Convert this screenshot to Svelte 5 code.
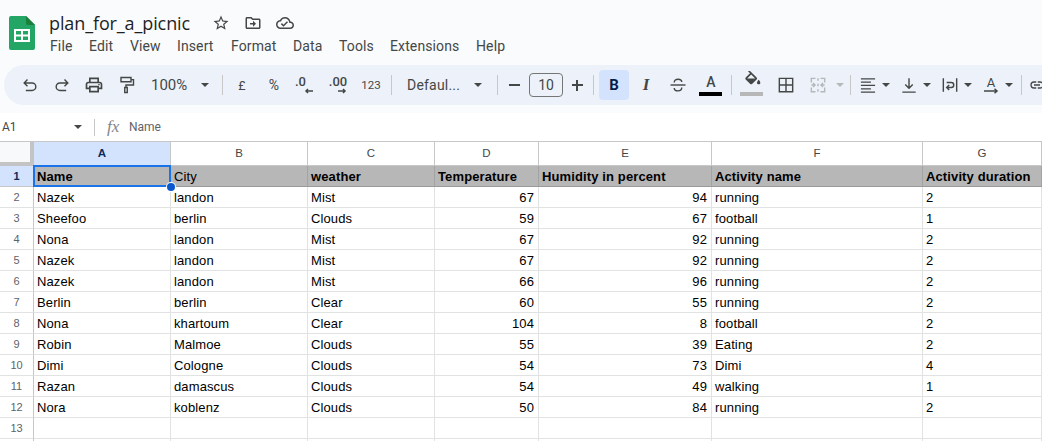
<script>
  const menu = [
    ['File', 39], ['Edit', 41], ['View', 47], ['Insert', 54], ['Format', 62],
    ['Data', 46], ['Tools', 51], ['Extensions', 86], ['Help', 40]
  ];

  const sw = 1.7;
  const icons = {
    undo: `<path d="M9 5.500 5 9.500l4 4M5 9.500h9.500a4.500 4.500 0 0 1 0 9H7" fill="none" stroke="currentColor" stroke-width="${sw}"/>`,
    redo: `<path d="M15 5.500l4 4-4 4M19 9.500H9.500a4.500 4.500 0 0 0 0 9H17" fill="none" stroke="currentColor" stroke-width="${sw}"/>`,
    print: '<path d="M19 8h-1V3H6v5H5c-1.660 0-3 1.340-3 3v6h4v4h12v-4h4v-6c0-1.660-1.340-3-3-3zM8 5h8v3H8V5zm8 14H8v-4h8v4zm4-4h-2v-2H6v2H4v-4c0-.55.45-1 1-1h14c.55 0 1 .45 1 1v4z"/><circle cx="18" cy="11.500" r="1"/>',
    paint: `<path d="M6 3h12v5H6zM18 5.500h3V12h-9v3M10.500 15h3v6h-3z" fill="none" stroke="currentColor" stroke-width="${sw}"/>`,
    strike: `<path d="M3 12h18" fill="none" stroke="currentColor" stroke-width="${sw}"/><path d="M7.500 9c0-2.600 2-4 4.500-4s4.500 1.400 4.500 3.500M16.500 15c0 2.600-2 4-4.500 4s-4.500-1.400-4.500-3.500" fill="none" stroke="currentColor" stroke-width="${sw}"/>`,
    fill: '<path transform="translate(1 -1)" d="M16.560 8.940L7.620 0 6.210 1.410l2.380 2.380-5.150 5.150c-.59.59-.59 1.540 0 2.120l5.500 5.500c.29.29.68.44 1.060.44s.77-.15 1.060-.44l5.500-5.500c.59-.58.59-1.530 0-2.120zM5.210 10L10 5.210 14.790 10H5.210zM19 11.500s-2 2.170-2 3.500c0 1.100.9 2 2 2s2-.9 2-2c0-1.330-2-3.500-2-3.500z"/>',
    borders: `<path d="M4 4h16v16H4zM12 4v16M4 12h16" fill="none" stroke="currentColor" stroke-width="${sw}"/>`,
    merge: `<path d="M9 4H4v5M15 4h5v5M9 20H4v-5M15 20h5v-5M12 4v3M12 10.500v3M12 17v3M4 12h4M6 9.500 8.500 12 6 14.500M20 12h-4M18 9.500 15.500 12l2.500 2.500" fill="none" stroke="currentColor" stroke-width="${sw}"/>`,
    align: '<path d="M3.500 4.500h17M3.500 8.500h12M3.500 12.500h17M3.500 16.500h12M3.500 20.500h17" fill="none" stroke="currentColor" stroke-width="1.500"/>',
    valign: `<path d="M12 4v12M7.500 11.500 12 16l4.500-4.500M4 20.500h16" fill="none" stroke="currentColor" stroke-width="${sw}"/>`,
    wrap: `<path d="M4 4v16M20 4v16M8 9h5.500a3 3 0 0 1 0 6H8M11 12l-3 3 3 3" fill="none" stroke="currentColor" stroke-width="${sw}"/>`,
    link: `<path d="M11 8H8a4 4 0 0 0 0 8h3M13 8h3a4 4 0 0 1 0 8h-3M8 12h8" fill="none" stroke="currentColor" stroke-width="${sw}"/>`
  };

  const tools = [
    { k: 'icon', w: 32, i: 'undo' }, { k: 'icon', w: 31, i: 'redo' }, { k: 'icon', w: 33, i: 'print' }, { k: 'icon', w: 32, i: 'paint' },
    { k: 'zoom', w: 72 }, { k: 'sep', w: 16 },
    { k: 'txt', w: 24, t: '£' }, { k: 'pct', w: 40, t: '%' },
    { k: 'dec', w: 24, t: '.0', dir: 'l' }, { k: 'dec', w: 40, t: '.00', dir: 'r' },
    { k: 'fmt', w: 26, t: '123' }, { k: 'sep', w: 14 },
    { k: 'font', w: 90 }, { k: 'sep', w: 18 },
    { k: 'minus', w: 16 }, { k: 'size', w: 44 }, { k: 'plus', w: 22 }, { k: 'sep', w: 11 },
    { k: 'bold', w: 30 }, { k: 'ital', w: 34 }, { k: 'icon', w: 30, i: 'strike' },
    { k: 'color', w: 36 }, { k: 'sep', w: 4 },
    { k: 'fill', w: 38 }, { k: 'icon', w: 30, i: 'borders' }, { k: 'icon', w: 34, i: 'merge', off: true },
    { k: 'caret', w: 10, off: true }, { k: 'sep', w: 10 },
    { k: 'icon', w: 26, i: 'align' }, { k: 'caret', w: 10 }, { k: 'sp', w: 5 },
    { k: 'icon', w: 26, i: 'valign' }, { k: 'caret', w: 10 }, { k: 'sp', w: 5 },
    { k: 'icon', w: 26, i: 'wrap' }, { k: 'caret', w: 10 }, { k: 'sp', w: 5 },
    { k: 'rotate', w: 26 }, { k: 'caret', w: 10 }, { k: 'sep', w: 14 },
    { k: 'icon', w: 18, i: 'link' }
  ];

  const cols = ['A', 'B', 'C', 'D', 'E', 'F', 'G'];
  const heads = ['Name', 'City', 'weather', 'Temperature', 'Humidity in percent', 'Activity name', 'Activity duration'];
  const rows = [
    ['Nazek', 'landon', 'Mist', 67, 94, 'running', 2],
    ['Sheefoo', 'berlin', 'Clouds', 59, 67, 'football', 1],
    ['Nona', 'landon', 'Mist', 67, 92, 'running', 2],
    ['Nazek', 'landon', 'Mist', 67, 92, 'running', 2],
    ['Nazek', 'landon', 'Mist', 66, 96, 'running', 2],
    ['Berlin', 'berlin', 'Clear', 60, 55, 'running', 2],
    ['Nona', 'khartoum', 'Clear', 104, 8, 'football', 2],
    ['Robin', 'Malmoe', 'Clouds', 55, 39, 'Eating', 2],
    ['Dimi', 'Cologne', 'Clouds', 54, 73, 'Dimi', 4],
    ['Razan', 'damascus', 'Clouds', 54, 49, 'walking', 1],
    ['Nora', 'koblenz', 'Clouds', 50, 84, 'running', 2],
    ['', '', '', '', '', '', ''],
    ['', '', '', '', '', '', '']
  ];
</script>

<div class="page">
  <header class="top">
    <svg class="logo" viewBox="0 0 26 34" width="26" height="34" aria-hidden="true">
      <path d="M2 0h15l9 9v23a2 2 0 0 1-2 2H2a2 2 0 0 1-2-2V2a2 2 0 0 1 2-2z" fill="#23a566" />
      <path d="M17 0l9 9h-7a2 2 0 0 1-2-2z" fill="#188038" />
      <path d="M5 13h16v13H5z" fill="#fff" />
      <path d="M7 15h5v3.500H7zM14 15h5v3.500h-5zM7 20.500h5V24H7zM14 20.500h5V24h-5z" fill="#23a566" />
    </svg>
    <div class="titles">
      <div class="titlerow">
        <span class="title">plan_for_a_picnic</span>
        <div class="actions">
          <svg viewBox="0 0 24 24" width="18" height="18"><path d="M22 9.240l-7.190-.62L12 2 9.190 8.630 2 9.240l5.460 4.730L5.820 21 12 17.270 18.180 21l-1.630-7.030L22 9.240zM12 15.400l-3.760 2.270 1-4.280-3.320-2.880 4.380-.38L12 6.100l1.710 4.040 4.380.38-3.320 2.880 1 4.280L12 15.400z" /></svg>
          <svg viewBox="0 0 24 24" width="18" height="18"><path d="M20 6h-8l-2-2H4c-1.100 0-2 .9-2 2v12c0 1.100.9 2 2 2h16c1.100 0 2-.9 2-2V8c0-1.100-.9-2-2-2zm0 12H4V6h5.170l2 2H20v10zm-8-4H8v-2h4V9l4 4-4 4v-3z" /></svg>
          <svg viewBox="0 0 24 24" width="18" height="18"><path d="M19.350 10.040C18.670 6.590 15.640 4 12 4 9.110 4 6.600 5.640 5.350 8.040 2.340 8.360 0 10.910 0 14c0 3.310 2.690 6 6 6h13c2.760 0 5-2.240 5-5 0-2.640-2.050-4.780-4.650-4.960zM19 18H6c-2.210 0-4-1.790-4-4 0-2.050 1.530-3.760 3.560-3.970l1.070-.11.5-.95C8.080 7.140 9.940 6 12 6c2.620 0 4.880 1.860 5.390 4.430l.3 1.500 1.530.11c1.560.1 2.780 1.410 2.780 2.960 0 1.650-1.350 3-3 3zm-9-3.820l-2.090-2.090L6.500 13.500 10 17l6.010-6.010-1.410-1.410z" /></svg>
        </div>
      </div>
      <nav class="menu">
        {#each menu as [label, w]}
          <span style="width:{w}px">{label}</span>
        {/each}
      </nav>
    </div>
  </header>

  <div class="toolbar">
    {#each tools as t}
      <div class="cell {t.k}" class:off={t.off} style="width:{t.w}px">
        {#if t.k === 'icon'}
          <svg viewBox="0 0 24 24" width="20" height="20">{@html icons[t.i]}</svg>
        {:else if t.k === 'zoom'}
          <span>100%</span><i class="tri"></i>
        {:else if t.k === 'sep'}
          <i class="line"></i>
        {:else if t.k === 'txt' || t.k === 'pct' || t.k === 'fmt'}
          <span>{t.t}</span>
        {:else if t.k === 'dec'}
          <div class="dec-in {t.dir}">
            <span>{t.t}</span>
            <svg viewBox="0 0 10 6" width="10" height="6">
              {#if t.dir === 'l'}
                <path d="M9 3H2M4 1 2 3l2 2" fill="none" stroke="currentColor" stroke-width="1.500" />
              {:else}
                <path d="M1 3h7M6 1l2 2-2 2" fill="none" stroke="currentColor" stroke-width="1.500" />
              {/if}
            </svg>
          </div>
        {:else if t.k === 'font'}
          <span>Defaul...</span><i class="tri"></i>
        {:else if t.k === 'minus'}
          <i class="dash"></i>
        {:else if t.k === 'size'}
          <div class="box">10</div>
        {:else if t.k === 'plus'}
          <i class="cross"></i>
        {:else if t.k === 'bold'}
          <span>B</span>
        {:else if t.k === 'ital'}
          <span>I</span>
        {:else if t.k === 'color'}
          <span>A</span><i class="bar black"></i>
        {:else if t.k === 'fill'}
          <svg viewBox="0 0 24 24" width="20" height="20">{@html icons.fill}</svg><i class="bar gray"></i>
        {:else if t.k === 'caret'}
          <i class="tri"></i>
        {:else if t.k === 'rotate'}
          <span>A</span>
          <svg viewBox="0 0 20 6" width="20" height="6"><path d="M3 3h13M13.500 .8 16 3l-2.500 2.200" fill="none" stroke="currentColor" stroke-width="1.500" /></svg>
        {/if}
      </div>
    {/each}
  </div>

  <div class="formula">
    <div class="namebox"><span>A1</span><i class="tri"></i></div>
    <i class="fline"></i>
    <span class="fx">fx</span>
    <span class="fval">Name</span>
  </div>

  <div class="sheet">
    <div class="grid">
      <div class="corner"></div>
      {#each cols as c, i}
        <div class="ch" class:sel={i === 0}>{c}</div>
      {/each}

      <div class="rh sel">1</div>
      {#each heads as h, i}
        <div class="c head" class:plain={i === 1}>{h}</div>
      {/each}

      {#each rows as r, ri}
        <div class="rh">{ri < 12 ? ri + 2 : ''}</div>
        {#each r as v}
          <div class="c" class:num={typeof v === 'number' && v > 4}>{v}</div>
        {/each}
      {/each}

      <div class="selbox"></div>
      <div class="handle"></div>
    </div>
  </div>
</div>

<style>
  :global(body) { margin: 0; background: #f9fbfd; }
  .page {
    width: 1042px; height: 441px; overflow: hidden; background: #f9fbfd;
    font-family: Roboto, "Liberation Sans", sans-serif; color: #444746;
  }
  .top { display: flex; height: 65px; box-sizing: border-box; padding: 16px 0 0 9px; }
  .logo { flex: none; }
  .titles { margin-left: 14px; margin-top: -5px; }
  .titlerow { display: flex; align-items: center; height: 24px; }
  .title { font: 18px/24px "Open Sans", sans-serif; color: #1f1f1f; width: 163px; white-space: nowrap; letter-spacing: -.11px; }
  .actions { display: flex; align-items: center; gap: 14px; fill: #444746; }
  .menu { display: flex; margin-top: 2px; font: 14px/18px Roboto, sans-serif; color: #444746; margin-left: 1px; }
  .menu span { flex: none; letter-spacing: .12px; }

  .toolbar {
    display: flex; align-items: center; width: 1060px; height: 40px; margin-left: 4px;
    padding-left: 10px; box-sizing: border-box; background: #edf2fa; border-radius: 20px; color: #444746;
  }
  .cell { flex: none; height: 30px; display: flex; align-items: center; justify-content: center; position: relative; box-sizing: border-box; fill: currentColor; }
  .cell.off { color: #b4b8ba; }
  .tri { display: block; width: 0; height: 0; border-left: 4px solid transparent; border-right: 4px solid transparent; border-top: 4px solid currentColor; }
  .line { display: block; width: 1px; height: 20px; background: #c7c7c7; }
  .zoom { justify-content: space-between; padding: 0 5px 0 9px; font-size: 15px; }
  .font { justify-content: space-between; padding: 0 6px 0 9px; font-size: 14px; letter-spacing: .2px; }
  .txt { font-size: 12.500px; }
  .pct { font-size: 14px; }
  .fmt { font-size: 11.500px; }
  .dec-in { display: flex; flex-direction: column; font-size: 13px; font-weight: 500; line-height: 12px; margin-top: 0; }
  .dec-in.l { align-items: flex-start; margin-left: -3px; }
  .dec-in.l svg { margin-left: 9px; }
  .dec-in.r { align-items: flex-end; }
  .dash { display: block; width: 11px; height: 2px; background: currentColor; }
  .cross { display: block; width: 11px; height: 11px; background:
    linear-gradient(currentColor, currentColor) center / 11px 2px no-repeat,
    linear-gradient(currentColor, currentColor) center / 2px 11px no-repeat; }
  .size { justify-content: flex-start; padding-left: 7px; }
  .box { width: 34px; height: 24px; box-sizing: border-box; border: 1px solid #747775; border-radius: 4px; text-align: center; font-size: 14px; line-height: 22px; }
  .bold { background: #d3e3fd; border-radius: 4px; color: #041e49; font-size: 15px; font-weight: 700; }
  .ital { font: italic 700 17px "Liberation Serif", serif; }
  .color span { font-size: 14px; font-weight: 500; margin-top: -7px; }
  .bar { position: absolute; left: 50%; margin-left: -12px; bottom: 4px; width: 23px; height: 4px; }
  .bar.black { background: #000; }
  .bar.gray { background: #b7b7b7; }
  .fill svg { margin-top: -9px; }
  .rotate { flex-direction: column; line-height: 12px; font-size: 13px; }
  .rotate svg { margin-top: -1px; }

  .formula { display: flex; align-items: center; height: 29px; margin-top: 8px; background: #fff; font-size: 12px; box-sizing: border-box; border-bottom: 1px solid #c7c7c7; }
  .namebox { width: 84px; display: flex; justify-content: space-between; align-items: center; padding: 0 2px; box-sizing: border-box; flex: none; margin-right: 8px; }
  .fline { width: 1px; height: 17px; background: #c7c7c7; margin-left: 2px; flex: none; }
  .fx { font: italic 17px "Liberation Serif", serif; color: #80868b; margin-left: 12px; width: 22px; }
  .fval { color: #5f6368; }

  .sheet { background: #fff; height: 300px; overflow: hidden; }
  .grid {
    display: grid; position: relative;
    grid-template-columns: 34px 137px 137px 127px 104px 173px 211px 119px;
    grid-template-rows: 24px repeat(14, 21px);
    font: 13px/22px "Liberation Sans", Arial, sans-serif; color: #000;
  }
  .corner { background: #f8f9fa; box-sizing: border-box; border-right: 4px solid #c4c4c4; border-bottom: 4px solid #c4c4c4; }
  .ch { background: #fff; box-sizing: border-box; border-right: 1px solid #c7c7c7; border-bottom: 1px solid #c7c7c7; text-align: center; font-size: 11.500px; line-height: 23px; color: #444746; }
  .ch.sel { background: #d3e3fd; font-weight: 700; color: #0b2a5b; }
  .rh { background: #fff; box-sizing: border-box; border-right: 1px solid #c7c7c7; border-bottom: 1px solid #e1e3e3; text-align: center; font-size: 11px; line-height: 21px; color: #5f6368; }
  .rh.sel { background: #d3e3fd; font-weight: 700; color: #0b2a5b; border-bottom-color: #c7c7c7; }
  .c { box-sizing: border-box; padding: 0 3px; border-right: 1px solid #e1e3e3; border-bottom: 1px solid #e1e3e3; white-space: nowrap; overflow: hidden; letter-spacing: .12px; }
  .c.num { text-align: right; padding-right: 4px; }
  .head { background: #b7b7b7; font-weight: 700; border-right-color: #a3a3a3; border-bottom-color: #999; }
  .head.plain { font-weight: 400; }
  .selbox { position: absolute; left: 33px; top: 23px; width: 138px; height: 22px; box-sizing: border-box; border: 2px solid #1a73e8; pointer-events: none; }
  .handle { position: absolute; left: 167px; top: 41px; width: 8px; height: 8px; border-radius: 50%; background: #0b57d0; box-shadow: 0 0 0 1px #fff; }
</style>
